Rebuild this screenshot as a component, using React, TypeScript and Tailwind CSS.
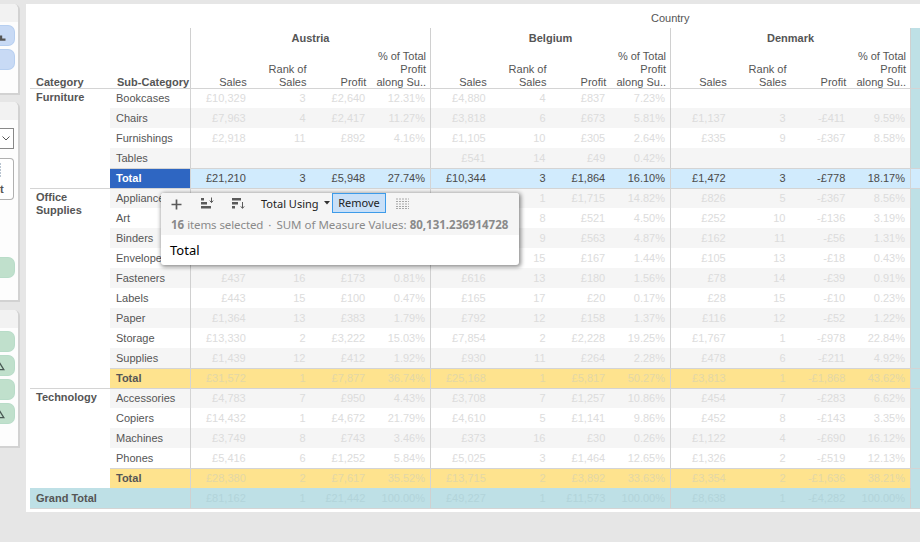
import React from "react";

type Tone = "white" | "grey" | "active" | "yellow" | "teal";

type RowData = { name: string; values: string[] };

const furniture: RowData[] = [
  { name: "Bookcases", values: ["£10,329", "3", "£2,640", "12.31%", "£4,880", "4", "£837", "7.23%", "", "", "", ""] },
  { name: "Chairs", values: ["£7,963", "4", "£2,417", "11.27%", "£3,818", "6", "£673", "5.81%", "£1,137", "3", "-£411", "9.59%"] },
  { name: "Furnishings", values: ["£2,918", "11", "£892", "4.16%", "£1,105", "10", "£305", "2.64%", "£335", "9", "-£367", "8.58%"] },
  { name: "Tables", values: ["", "", "", "", "£541", "14", "£49", "0.42%", "", "", "", ""] },
];

const office: RowData[] = [
  { name: "Appliances", values: ["", "", "", "", "", "1", "£1,715", "14.82%", "£826", "5", "-£367", "8.56%"] },
  { name: "Art", values: ["", "", "", "", "", "8", "£521", "4.50%", "£252", "10", "-£136", "3.19%"] },
  { name: "Binders", values: ["", "", "", "", "", "9", "£563", "4.87%", "£162", "11", "-£56", "1.31%"] },
  { name: "Envelopes", values: ["", "", "", "", "", "15", "£167", "1.44%", "£105", "13", "-£18", "0.43%"] },
  { name: "Fasteners", values: ["£437", "16", "£173", "0.81%", "£616", "13", "£180", "1.56%", "£78", "14", "-£39", "0.91%"] },
  { name: "Labels", values: ["£443", "15", "£100", "0.47%", "£165", "17", "£20", "0.17%", "£28", "15", "-£10", "0.23%"] },
  { name: "Paper", values: ["£1,364", "13", "£383", "1.79%", "£792", "12", "£158", "1.37%", "£116", "12", "-£52", "1.22%"] },
  { name: "Storage", values: ["£13,330", "2", "£3,222", "15.03%", "£7,854", "2", "£2,228", "19.25%", "£1,767", "1", "-£978", "22.84%"] },
  { name: "Supplies", values: ["£1,439", "12", "£412", "1.92%", "£930", "11", "£264", "2.28%", "£478", "6", "-£211", "4.92%"] },
];

const technology: RowData[] = [
  { name: "Accessories", values: ["£4,783", "7", "£950", "4.43%", "£3,708", "7", "£1,257", "10.86%", "£454", "7", "-£283", "6.62%"] },
  { name: "Copiers", values: ["£14,432", "1", "£4,672", "21.79%", "£4,610", "5", "£1,141", "9.86%", "£452", "8", "-£143", "3.35%"] },
  { name: "Machines", values: ["£3,749", "8", "£743", "3.46%", "£373", "16", "£30", "0.26%", "£1,122", "4", "-£690", "16.12%"] },
  { name: "Phones", values: ["£5,416", "6", "£1,252", "5.84%", "£5,025", "3", "£1,464", "12.65%", "£1,326", "2", "-£519", "12.13%"] },
];

const totals = {
  furniture: ["£21,210", "3", "£5,948", "27.74%", "£10,344", "3", "£1,864", "16.10%", "£1,472", "3", "-£778", "18.17%"],
  office: ["£31,572", "1", "£7,877", "36.74%", "£25,168", "1", "£5,817", "50.27%", "£3,813", "1", "-£1,868", "43.62%"],
  technology: ["£28,380", "2", "£7,617", "35.52%", "£13,715", "2", "£3,892", "33.63%", "£3,354", "2", "-£1,636", "38.21%"],
  grand: ["£81,162", "1", "£21,442", "100.00%", "£49,227", "1", "£11,573", "100.00%", "£8,638", "1", "-£4,282", "100.00%"],
};

const toneStyles: Record<Tone, { bg: string; value: string; strip: string }> = {
  white: { bg: "bg-white", value: "text-[#dcdcdc]", strip: "bg-[#bee0e6]" },
  grey: { bg: "bg-[#f5f5f5]", value: "text-[#dcdcdc]", strip: "bg-[#bee0e6]" },
  active: { bg: "bg-[#d1ebfd]", value: "text-[#4a4a4a]", strip: "bg-[#d1ebfd]" },
  yellow: { bg: "bg-[#fee38e]", value: "text-[#e3d7a6]", strip: "bg-[#bee0e6]" },
  teal: { bg: "bg-[#bee0e6]", value: "text-[#b2d4da]", strip: "bg-[#bee0e6]" },
};

function ValueCells({ values, tone, topLine }: { values: string[]; tone: Tone; topLine?: boolean }) {
  const s = toneStyles[tone];
  const line = topLine ? "border-t border-[#d4d4d4]" : "";
  return (
    <>
      {[0, 4, 8].map((start) => (
        <div key={start} className={`flex h-5 w-[240px] border-l border-[#d0d0d0] ${s.bg} ${line}`}>
          {values.slice(start, start + 4).map((v, i) => (
            <div key={i} className={`flex w-[60px] items-center justify-end pr-[5px] ${s.value}`}>
              {v}
            </div>
          ))}
        </div>
      ))}
      <div className={`h-5 w-[10px] border-l border-[#d0d0d0] ${s.strip} ${line}`} />
    </>
  );
}

function DataRow({ row, tone, topLine }: { row: RowData; tone: Tone; topLine?: boolean }) {
  return (
    <div className="flex h-5">
      <div
        className={`flex h-5 w-[80px] items-center pl-[6px] text-[#555555] ${toneStyles[tone].bg} ${
          topLine ? "border-t border-[#d4d4d4]" : ""
        }`}
      >
        {row.name}
      </div>
      <ValueCells values={row.values} tone={tone} topLine={topLine} />
    </div>
  );
}

function TotalRow({ values, active }: { values: string[]; active?: boolean }) {
  return (
    <div className="flex h-5">
      <div
        className={`flex h-5 w-[80px] items-center border-t border-[#d4d4d4] pl-[6px] font-bold ${
          active ? "bg-[#2e66c2] text-white" : "bg-[#fee38e] text-[#555555]"
        }`}
      >
        Total
      </div>
      <ValueCells values={values} tone={active ? "active" : "yellow"} topLine />
    </div>
  );
}

function Section({
  label,
  rows,
  total,
  active,
  firstTone,
}: {
  label: string[];
  rows: RowData[];
  total: string[];
  active?: boolean;
  firstTone: "white" | "grey";
}) {
  const other = firstTone === "white" ? "grey" : "white";
  return (
    <div className="flex">
      <div className="w-[80px] border-t border-[#d4d4d4] pl-[6px] pt-[2px] font-bold leading-[13px] text-[#555555]">
        {label.map((l) => (
          <div key={l}>{l}</div>
        ))}
      </div>
      <div className="flex flex-col">
        {rows.map((r, i) => (
          <DataRow key={r.name} row={r} tone={i % 2 === 0 ? firstTone : other} topLine={i === 0} />
        ))}
        <TotalRow values={total} active={active} />
      </div>
    </div>
  );
}

function MeasureHeaders() {
  const heads = [["Sales"], ["Rank of", "Sales"], ["Profit"], ["% of Total", "Profit", "along Su.."]];
  return (
    <div className="flex h-10 items-end">
      {heads.map((lines) => (
        <div key={lines[0]} className="w-[60px] translate-y-px pr-[4px] text-right leading-[13px] text-[#555555]">
          {lines.map((l) => (
            <div key={l} className="whitespace-nowrap">
              {l}
            </div>
          ))}
        </div>
      ))}
    </div>
  );
}

function CountryHeader({ name }: { name: string }) {
  return (
    <div className="h-[60px] w-[240px] border-l border-[#d0d0d0]">
      <div className="flex h-5 items-center justify-center font-bold text-[#555555]">{name}</div>
      <MeasureHeaders />
    </div>
  );
}

function SidePanel({ height, children }: { height: string; children?: React.ReactNode }) {
  return (
    <div className={`w-[20px] overflow-hidden rounded-tr-[6px] border-r-2 border-b-2 border-[#d2d2d2] bg-[#fdfdfd] ${height}`}>
      <div className="h-[18px] bg-[#f2f2f2]" />
      {children}
    </div>
  );
}

function Triangle() {
  return (
    <svg width="5" height="10" viewBox="0 0 5 10">
      <path d="M-1 1L3.8 8.6H-1" fill="none" stroke="#4a5a55" strokeWidth="1.3" />
    </svg>
  );
}

function GreenPill({ glyph }: { glyph?: boolean }) {
  return (
    <div className="flex h-[21px] w-[15px] items-center rounded-r-[7px] border border-l-0 border-[#b8dcc8] bg-[#c0e0cc]">
      {glyph && <Triangle />}
    </div>
  );
}

function Sidebar() {
  return (
    <div className="flex w-[26px] shrink-0 flex-col">
      <SidePanel height="h-[91px]">
        <div className="flex flex-col gap-[3px] pt-[3px]">
          <div className="flex h-[21px] w-[15px] items-end rounded-r-[7px] border border-l-0 border-[#b7cff0] bg-[#c8daf5] pb-[4px]">
            <svg width="6" height="6" viewBox="0 0 6 6">
              <path d="M0 0.5H2.2V3.5H5.5V5.8H0Z" fill="#555555" />
            </svg>
          </div>
          <div className="h-[21px] w-[15px] rounded-r-[7px] border border-l-0 border-[#b7cff0] bg-[#c8daf5]" />
        </div>
      </SidePanel>
      <div className="h-[7px]" />
      <SidePanel height="h-[200px]">
        <div className="mt-[8px] flex h-[21px] w-[14px] items-center border border-l-0 border-[#888888] bg-white pl-[2px]">
          <svg width="8" height="5" viewBox="0 0 8 5">
            <path d="M0.5 0.5L4 4L7.5 0.5" fill="none" stroke="#555555" strokeWidth="1" />
          </svg>
        </div>
        <div className="mt-[9px] flex h-[42px] w-[14px] flex-col items-start justify-between rounded-r-[4px] border border-l-0 border-[#b0b0b0] bg-white pb-[3px] pt-[4px] font-bold leading-[13px] text-[#555555]">
          <svg width="2" height="15" viewBox="0 0 2 15">
            <path d="M0.5 0v15" fill="none" stroke="#b8c4d0" strokeWidth="1" strokeDasharray="2 1" />
          </svg>
          <span>t</span>
        </div>
        <div className="mt-[57px]">
          <GreenPill />
        </div>
      </SidePanel>
      <div className="h-[8px]" />
      <SidePanel height="h-[138px]">
        <div className="flex flex-col gap-[3px] pt-[3px]">
          <GreenPill />
          <GreenPill glyph />
          <GreenPill />
          <GreenPill glyph />
        </div>
      </SidePanel>
    </div>
  );
}

function SortIcon({ descending }: { descending?: boolean }) {
  const bars = descending
    ? ["M0 1h9v2.4H0z", "M0 5h6v2.4H0z", "M0 9h3v2.4H0z"]
    : ["M0 1h3v2.4H0z", "M0 5h6v2.4H0z", "M0 9h10v2.4H0z"];
  const arrow = descending ? "M10.5 5v6M8.8 9.4l1.7 2 1.7-2" : "M10.5 0.5v5M8.8 3.6l1.7 2 1.7-2";
  return (
    <svg width="13" height="12" viewBox="0 0 13 12">
      {bars.map((d) => (
        <path key={d} d={d} fill="#5a5a5a" />
      ))}
      <path d={arrow} fill="none" stroke="#5a5a5a" strokeWidth="1" />
    </svg>
  );
}

function Tooltip() {
  return (
    <div className="absolute left-[135px] top-[189px] h-[72px] w-[358px] overflow-hidden rounded-[3px] bg-white [font-family:Noto_Sans,sans-serif] shadow-[1px_1px_4px_1px_rgba(0,0,0,0.45)]">
      <div className="h-[42px] bg-[#f5f5f5]">
        <div className="flex h-5 items-center pl-[10px]">
          <svg width="11" height="11" viewBox="0 0 11 11" className="translate-y-px">
            <path d="M5.5 0.5v10M0.5 5.5h10" fill="none" stroke="#5a5a5a" strokeWidth="1.7" />
          </svg>
          <div className="ml-[19px] flex">
            <SortIcon />
          </div>
          <div className="ml-[18px] flex">
            <SortIcon descending />
          </div>
          <span className="ml-[16px] w-[60px] translate-y-px whitespace-nowrap text-[11px] text-[#222222]">Total Using</span>
          <svg width="6" height="4" viewBox="0 0 6 4" className="ml-[3px]">
            <path d="M0 0h6L3 3.5Z" fill="#333333" />
          </svg>
          <div className="ml-[2px] flex h-5 w-[54px] items-center justify-center border border-[#3d9be9] bg-[#c9e0f8] pt-px text-[11px] text-[#222222]">
            Remove
          </div>
          <svg width="13" height="11" viewBox="0 0 13 11" className="ml-[10px]">
            <path
              d="M0 1h13M0 3.5h13M0 6h13M0 8.5h13M0 10.5h13"
              fill="none"
              stroke="#a8a8a8"
              strokeWidth="1"
              strokeDasharray="2 1"
            />
          </svg>
        </div>
        <div className="flex h-[22px] items-center whitespace-nowrap pl-[10px] pt-[2px] text-[11.5px] text-[#8a8a8a]">
          <span className="font-bold">16</span>
          <span className="ml-[3px] tracking-[-0.1px]">items selected</span>
          <span className="mx-[5px]">·</span>
          <span>SUM of Measure Values:</span>
          <span className="ml-[3px] font-bold">80,131.236914728</span>
        </div>
      </div>
      <div className="flex h-[30px] items-center pl-[9px] pt-[2px] text-[13px] text-black">Total</div>
    </div>
  );
}

export default function App() {
  return (
    <div className="flex h-[542px] w-[920px] items-start overflow-hidden bg-[#e6e6e6] pt-1 [font-family:Liberation_Sans,Arial,sans-serif] text-[11px]">
      <Sidebar />
      <div className="relative h-[508px] w-[894px] bg-white pl-1">
        <div className="flex h-6 items-end pb-[3px] pl-[621px] leading-[13px] text-[#555555]">Country</div>
        <div className="flex h-[60px]">
          <div className="flex w-[80px] translate-y-px items-end pl-[6px] font-bold leading-[13px] text-[#555555]">Category</div>
          <div className="flex w-[80px] translate-y-px items-end pl-[7px] font-bold leading-[13px] whitespace-nowrap text-[#555555]">
            Sub-Category
          </div>
          <CountryHeader name="Austria" />
          <CountryHeader name="Belgium" />
          <CountryHeader name="Denmark" />
          <div className="h-[60px] w-[10px] border-l border-[#d0d0d0] bg-[#bee0e6]" />
        </div>
        <Section label={["Furniture"]} rows={furniture} total={totals.furniture} active firstTone="white" />
        <Section label={["Office", "Supplies"]} rows={office} total={totals.office} firstTone="grey" />
        <Section label={["Technology"]} rows={technology} total={totals.technology} firstTone="grey" />
        <div className="flex h-[21px] border-b border-[#d4d4d4]">
          <div className="flex w-[160px] items-center bg-[#bee0e6] pl-[6px] font-bold text-[#555555]">Grand Total</div>
          <ValueCells values={totals.grand} tone="teal" />
        </div>
        <Tooltip />
      </div>
    </div>
  );
}
